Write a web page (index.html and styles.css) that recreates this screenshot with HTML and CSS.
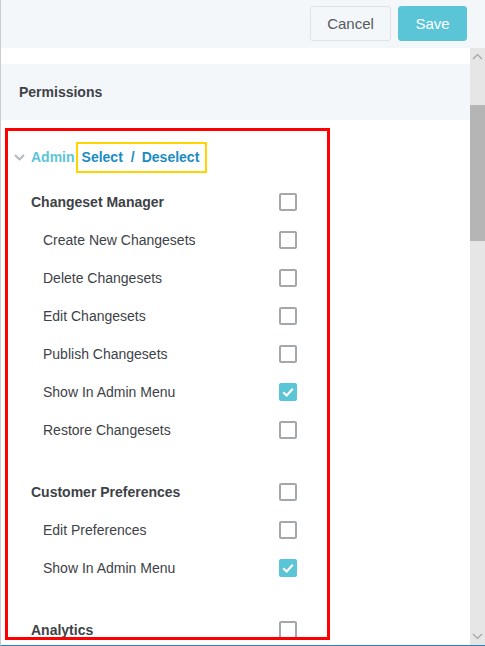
FILE: index.html
```html
<!DOCTYPE html>
<html>
<head>
<meta charset="utf-8">
<link rel="stylesheet" href="styles.css">
</head>
<body>
<div class="app">
  <header class="topbar">
    <button class="btn btn-cancel">Cancel</button>
    <button class="btn btn-save">Save</button>
  </header>
  <div class="body">
    <main class="content">
      <div class="band">Permissions</div>
      <div class="list">
        <div class="admin-row">
          <svg class="chev" width="11" height="7" viewBox="0 0 11 7"><path d="M1 1 L5.5 5.5 L10 1" fill="none" stroke="#b0b6bc" stroke-width="1.8"/></svg>
          <span class="admin">Admin</span>
          <span class="sel-box"><span class="link">Select</span><span class="slash">/</span><span class="link">Deselect</span></span>
        </div>
        <div class="group">
          <div class="row title"><span>Changeset Manager</span><span class="cb"></span></div>
          <div class="row sub"><span>Create New Changesets</span><span class="cb"></span></div>
          <div class="row sub"><span>Delete Changesets</span><span class="cb"></span></div>
          <div class="row sub"><span>Edit Changesets</span><span class="cb"></span></div>
          <div class="row sub"><span>Publish Changesets</span><span class="cb"></span></div>
          <div class="row sub"><span>Show In Admin Menu</span><span class="cb on"><svg width="18" height="18" viewBox="0 0 18 18"><path d="M4.2 9.3 L7.6 12.5 L13.8 5.8" fill="none" stroke="#fff" stroke-width="2.2"/></svg></span></div>
          <div class="row sub"><span>Restore Changesets</span><span class="cb"></span></div>
        </div>
        <div class="group">
          <div class="row title"><span>Customer Preferences</span><span class="cb"></span></div>
          <div class="row sub"><span>Edit Preferences</span><span class="cb"></span></div>
          <div class="row sub"><span>Show In Admin Menu</span><span class="cb on"><svg width="18" height="18" viewBox="0 0 18 18"><path d="M4.2 9.3 L7.6 12.5 L13.8 5.8" fill="none" stroke="#fff" stroke-width="2.2"/></svg></span></div>
        </div>
        <div class="group">
          <div class="row title"><span>Analytics</span><span class="cb"></span></div>
        </div>
      </div>
      <div class="highlight"></div>
    </main>
    <div class="scrollbar">
      <div class="arrow"><svg width="11" height="7" viewBox="0 0 11 7"><path d="M1 6 L5.5 1.5 L10 6" fill="none" stroke="#a3a3a3" stroke-width="1.2"/></svg></div>
      <div class="track"><div class="thumb"></div></div>
      <div class="arrow"><svg width="11" height="7" viewBox="0 0 11 7"><path d="M1 1 L5.5 5.5 L10 1" fill="none" stroke="#a3a3a3" stroke-width="1.2"/></svg></div>
    </div>
  </div>
</div>
</body>
</html>
```

FILE: styles.css
```css
* { box-sizing: border-box; }
html, body { margin: 0; padding: 0; background: #fff; }
body { font-family: "Liberation Sans", Arial, sans-serif; font-size: 14px; color: #3d4247; }

.app {
  width: 485px;
  height: 646px;
  border-left: 1px solid #c9ccd0;
  border-bottom: 1px solid #2a80c0;
  display: flex;
  flex-direction: column;
  overflow: hidden;
}

.topbar {
  height: 48px;
  flex: none;
  background: #f4f7fa;
  display: flex;
  justify-content: flex-end;
  align-items: flex-start;
  padding: 6px 18px 0 0;
  gap: 7px;
}
.btn {
  height: 35px;
  border-radius: 3px;
  font-family: "Liberation Sans", Arial, sans-serif;
  font-size: 15px;
  padding: 0;
  cursor: pointer;
}
.btn-cancel {
  width: 81px;
  background: #f4f7fa;
  border: 1px solid #dfe3e8;
  color: #555a5f;
}
.btn-save {
  width: 69px;
  background: #5bc5d8;
  border: 1px solid #5bc5d8;
  color: #fff;
}

.body {
  flex: 1;
  display: flex;
  min-height: 0;
}
.content {
  flex: 1;
  position: relative;
  overflow: hidden;
  padding-top: 16px;
}
.band {
  height: 56px;
  background: #f4f7fa;
  padding-left: 18px;
  display: flex;
  align-items: center;
  font-weight: bold;
  color: #3d4247;
}

.list {
  padding-left: 13px;
  width: 296px;
}
.admin-row {
  margin-top: 18px;
  height: 38px;
  display: flex;
  align-items: center;
}
.chev { margin-right: 6px; flex: none; }
.admin { color: #5bc5d8; font-weight: bold; }
.sel-box {
  margin-left: 1px;
  height: 31px;
  border: 2px solid #ffd400;
  padding: 0 6px 0 4px;
  display: inline-flex;
  align-items: center;
  font-weight: bold;
  color: #1b8cc3;
}
.slash { margin: 0 7px 0 8px; }

.group { padding-left: 17px; margin-top: 24px; }
.admin-row + .group { margin-top: 7px; }
.row {
  height: 38px;
  display: flex;
  align-items: center;
  justify-content: space-between;
}
.row.title { font-weight: bold; }
.row.sub { padding-left: 12px; }

.cb {
  width: 18px;
  height: 18px;
  border: 2px solid #a3a8ad;
  border-radius: 2px;
  flex: none;
  position: relative;
  background: #fff;
}
.cb.on { background: #5bc5d8; border-color: #5bc5d8; }
.cb svg { position: absolute; left: -2px; top: -2px; }

.highlight {
  position: absolute;
  left: 4px;
  top: 80px;
  width: 325px;
  height: 512px;
  border: 3px solid #ff0000;
  pointer-events: none;
}

.scrollbar {
  width: 15px;
  flex: none;
  background: #e6e6e6;
  display: flex;
  flex-direction: column;
}
.arrow {
  height: 17px;
  display: flex;
  align-items: center;
  justify-content: center;
  flex: none;
}
.track { flex: 1; padding-top: 40px; }
.thumb { height: 136px; background: #b5b5b5; }
```
